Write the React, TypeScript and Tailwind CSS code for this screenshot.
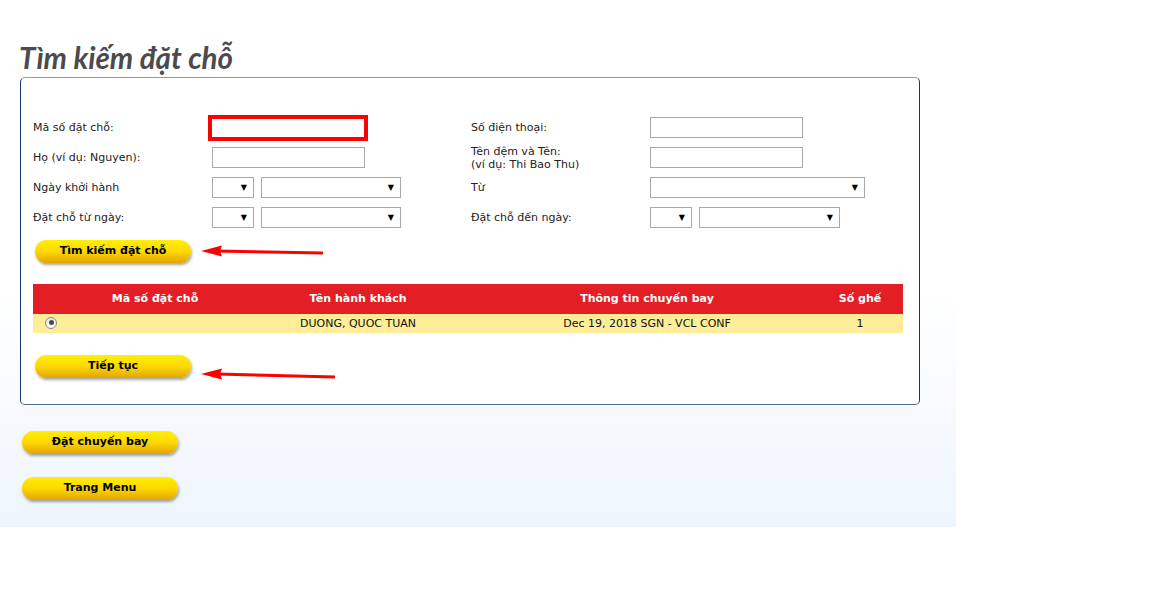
import type React from "react"

const font = { fontFamily: '"DejaVu Sans", Verdana, sans-serif' }

function YellowButton({ label }: { label: string }) {
  return (
    <button className="w-[156px] h-[23px] shrink-0 rounded-full bg-linear-to-b from-[#fff000] via-[#fcd800] to-[#e2a400] shadow-[1px_2px_3px_rgba(0,0,0,0.35)] text-[11px] font-bold text-black flex items-center justify-center">
      {label}
    </button>
  )
}

function Arrow({ width, drop }: { width: number; drop: number }) {
  const h = 14
  return (
    <svg width={width} height={h + drop} viewBox={`0 0 ${width} ${h + drop}`} className="block">
      <line x1={16} y1={7} x2={width - 1} y2={7 + drop} stroke="#f00" strokeWidth={3} />
      <polygon points={`1,7 22,1.5 20,7 22,12.5`} fill="#f00" />
    </svg>
  )
}

function TextBox({ highlight }: { highlight?: boolean }) {
  return (
    <div
      className={
        highlight
          ? "w-[160px] h-[26px] -ml-[4px] border-4 border-[#ff0000] bg-white"
          : "w-[153px] h-[21px] border border-[#a9a9a9] bg-white"
      }
    />
  )
}

function FakeSelect({ w }: { w: string }) {
  return (
    <div className={`${w} h-[21px] border border-[#a9a9a9] bg-white flex items-center justify-end pr-[6px]`}>
      <span className="text-[8px] leading-none text-black">▼</span>
    </div>
  )
}

function Row({ label, children }: { label: React.ReactNode; children: React.ReactNode }) {
  return (
    <div className="flex items-center h-[21px]">
      <div className="w-[179px] text-[11px] leading-[13px] text-[#222]">{label}</div>
      <div className="flex items-center gap-[7px]">{children}</div>
    </div>
  )
}

export default function App() {
  return (
    <div style={font} className="w-[956px] h-[527px] bg-linear-to-b from-white from-55% to-[#eef5fd] pt-[40px]">
      <h1
        style={{ fontFamily: 'Lato, "Open Sans", sans-serif' }}
        className="ml-[19px] text-[29.5px] leading-[36px] font-bold italic text-[#4b4b4d]"
      >
        Tìm kiếm đặt chỗ
      </h1>

      <div className="ml-[20px] w-[900px] mt-[1px] rounded-[5px] border border-[#1b3770] border-t-[#8d9cb6] border-b-[#4d6791] bg-white pl-[12px] pt-[39px] pb-[26px]">
        <div className="grid grid-cols-[438px_1fr] gap-y-[9px]">
          <Row label="Mã số đặt chỗ:">
            <TextBox highlight />
          </Row>
          <Row label="Số điện thoại:">
            <TextBox />
          </Row>
          <Row label="Họ (ví dụ: Nguyen):">
            <TextBox />
          </Row>
          <Row
            label={
              <>
                Tên đệm và Tên:
                <br />
                (ví dụ: Thi Bao Thu)
              </>
            }
          >
            <TextBox />
          </Row>
          <Row label="Ngày khởi hành">
            <FakeSelect w="w-[42px]" />
            <FakeSelect w="w-[140px]" />
          </Row>
          <Row label="Từ">
            <FakeSelect w="w-[215px]" />
          </Row>
          <Row label="Đặt chỗ từ ngày:">
            <FakeSelect w="w-[42px]" />
            <FakeSelect w="w-[140px]" />
          </Row>
          <Row label="Đặt chỗ đến ngày:">
            <FakeSelect w="w-[42px]" />
            <FakeSelect w="w-[141px]" />
          </Row>
        </div>

        <div className="flex items-start h-[23px] mt-[12px] ml-[2px]">
          <YellowButton label="Tìm kiếm đặt chỗ" />
          <div className="ml-[9px] mt-[4px]">
            <Arrow width={124} drop={2} />
          </div>
        </div>

        <div className="w-[870px] mt-[21px] text-[11px]">
          <div className="flex h-[30px] items-center bg-[#e31e24] text-white font-bold">
            <div className="w-[244px] text-center">Mã số đặt chỗ</div>
            <div className="w-[162px] text-center">Tên hành khách</div>
            <div className="w-[378px] pl-[38px] text-center">Thông tin chuyến bay</div>
            <div className="w-[86px] text-center">Số ghế</div>
          </div>
          <div className="flex h-[19px] items-center bg-[#ffed9a] text-[#111]">
            <div className="w-[244px] pl-[12px] -mt-[2px]">
              <div className="w-[12px] h-[12px] rounded-full border border-[#8a8a8a] bg-linear-to-b from-[#e6e6e6] to-[#ffffff] flex items-center justify-center">
                <div className="w-[5px] h-[5px] rounded-full bg-[#4a4a4a]" />
              </div>
            </div>
            <div className="w-[162px] pt-[2px] text-center">DUONG, QUOC TUAN</div>
            <div className="w-[378px] pl-[38px] pt-[2px] text-center">Dec 19, 2018 SGN - VCL CONF</div>
            <div className="w-[86px] pt-[2px] text-center">1</div>
          </div>
        </div>

        <div className="flex items-start h-[23px] mt-[22px] ml-[2px]">
          <YellowButton label="Tiếp tục" />
          <div className="ml-[9px] mt-[12px]">
            <Arrow width={136} drop={3} />
          </div>
        </div>
      </div>

      <div className="ml-[22px] mt-[26px] flex flex-col gap-[23px]">
        <YellowButton label="Đặt chuyến bay" />
        <YellowButton label="Trang Menu" />
      </div>
    </div>
  )
}
